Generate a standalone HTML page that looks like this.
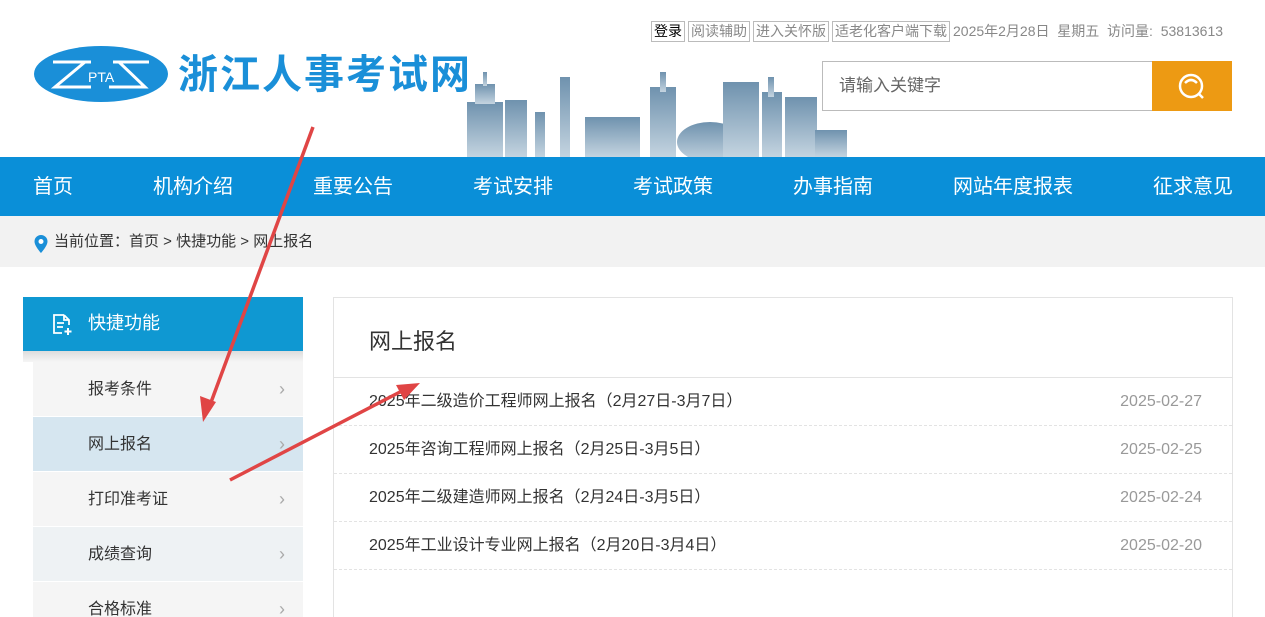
<!DOCTYPE html><html><head><meta charset="utf-8"><style>
*{margin:0;padding:0;box-sizing:border-box}
html,body{width:1265px;height:617px;overflow:hidden}
body{background:#fff;font-family:"Liberation Sans","Noto Sans CJK SC",sans-serif;position:relative}
.a{position:absolute}
.tb span{display:inline-block;border:1px solid #bbb;padding:0 2px;font-size:14px;color:#888;line-height:19px;margin-right:3px}
.nav{top:157px;left:0;width:1265px;height:59px;background:#0a8fd8}
.nav span{position:absolute;top:17px;color:#fff;font-size:20px;line-height:26px}
.side{left:33px;width:270px;height:55px;border-bottom:1px solid #fff;background:#f5f5f5;font-size:16px;color:#333;padding-left:55px;line-height:55px}
.side i{position:absolute;right:18px;top:0;font-style:normal;color:#aaa;font-size:18px}
.row{left:334px;width:898px;height:48px;border-bottom:1px dashed #e3e3e3;font-size:16px;color:#333;line-height:48px;padding-left:35px}
.row b{position:absolute;right:30px;font-weight:normal;color:#999}
</style></head><body>
<div class="a tb" style="left:651px;top:21px;white-space:nowrap"><span style="color:#000">登录</span><span>阅读辅助</span><span>进入关怀版</span><span>适老化客户端下载</span><font style="font-size:14px;color:#888">2025年2月28日&nbsp; 星期五&nbsp; 访问量:&nbsp; 53813613</font></div>
<svg class="a" style="left:33px;top:45px" width="136" height="58"><ellipse cx="68" cy="29" rx="67" ry="28" fill="#1a8fd8"/><path d="M20 17h38M52 17L22 42h36M80 17h36M86 17l26 25H76" stroke="#fff" stroke-width="3" fill="none"/><text x="55" y="37" fill="#fff" font-size="14" font-family="Liberation Sans">PTA</text></svg>
<div class="a" style="left:178px;top:50px;font-size:40px;font-weight:bold;color:#1a8fd8;letter-spacing:2px;line-height:50px">浙江人事考试网</div>
<svg class="a" style="left:465px;top:62px" width="385" height="95"><defs><linearGradient id="g" x1="0" y1="0" x2="0" y2="1"><stop offset="0" stop-color="#6f92ae"/><stop offset="1" stop-color="#c4d4e0"/></linearGradient></defs><g fill="url(#g)">
<rect x="2" y="40" width="36" height="55"/><rect x="10" y="22" width="20" height="20"/><rect x="18" y="10" width="4" height="14"/>
<rect x="40" y="38" width="22" height="57"/><rect x="70" y="50" width="10" height="45"/><rect x="95" y="15" width="10" height="80"/>
<rect x="120" y="55" width="55" height="40"/><rect x="185" y="25" width="26" height="70"/><rect x="195" y="10" width="6" height="20"/>
<ellipse cx="245" cy="80" rx="33" ry="20"/><rect x="258" y="20" width="36" height="75"/><rect x="297" y="30" width="20" height="65"/><rect x="303" y="15" width="6" height="20"/>
<rect x="320" y="35" width="32" height="60"/><rect x="350" y="68" width="32" height="27"/></g></svg>
<div class="a" style="left:822px;top:61px;width:331px;height:50px;border:1px solid #bbb;font-size:17px;color:#666;line-height:48px;padding-left:16px">请输入关键字</div>
<div class="a" style="left:1152px;top:61px;width:80px;height:50px;background:#ed9a13"><svg width="80" height="50"><circle cx="39" cy="25" r="11" stroke="#fff" stroke-width="2.5" fill="none"/><path d="M33 22q6-6 12 0M47 33l4 4" stroke="#fff" stroke-width="2.5" fill="none"/></svg></div>
<div class="a nav"><span style="left:33px">首页</span><span style="left:153px">机构介绍</span><span style="left:313px">重要公告</span><span style="left:473px">考试安排</span><span style="left:633px">考试政策</span><span style="left:793px">办事指南</span><span style="left:953px">网站年度报表</span><span style="left:1153px">征求意见</span></div>
<div class="a" style="top:216px;left:0;width:1265px;height:51px;background:#f2f2f2;font-size:15px;color:#333;line-height:52px;padding-left:54px">当前位置：首页 &gt; 快捷功能 &gt; 网上报名</div>
<svg class="a" style="left:33px;top:234px" width="16" height="20"><path d="M8 1a6.5 6.5 0 0 0-6.5 6.5C1.5 12 8 19 8 19s6.5-7 6.5-11.5A6.5 6.5 0 0 0 8 1z" fill="#1a8fd8"/><circle cx="8" cy="7.5" r="2.5" fill="#fff"/></svg>
<div class="a" style="left:23px;top:297px;width:280px;height:54px;background:#0f98d2;color:#fff;font-size:18px;line-height:52px;padding-left:65px">快捷功能</div>
<svg class="a" style="left:50px;top:313px" width="24" height="24"><path d="M14 2H4v18h8M14 2l5 5v5M14 2v5h5M7 10h7M7 14h6" stroke="#fff" stroke-width="1.8" fill="none"/><path d="M18 15v7M14.5 18.5h7" stroke="#fff" stroke-width="2"/></svg>
<div class="a" style="left:23px;top:351px;width:280px;height:11px;background:linear-gradient(#ddd,#f5f5f5)"></div>
<div class="a side" style="top:362px">报考条件<i>›</i></div>
<div class="a side" style="top:417px;background:#d6e6f0">网上报名<i>›</i></div>
<div class="a side" style="top:472px">打印准考证<i>›</i></div>
<div class="a side" style="top:527px;background:#eef2f4">成绩查询<i>›</i></div>
<div class="a side" style="top:582px;height:35px;border-bottom:0">合格标准<i>›</i></div>
<div class="a" style="left:333px;top:297px;width:900px;height:320px;border:1px solid #e3e3e3;border-bottom:0"></div>
<div class="a" style="left:369px;top:324px;font-size:22px;color:#333">网上报名</div>
<div class="a" style="left:334px;top:377px;width:898px;border-top:1px solid #e3e3e3"></div>
<div class="a row" style="top:378px">2025年二级造价工程师网上报名（2月27日-3月7日）<b>2025-02-27</b></div>
<div class="a row" style="top:426px">2025年咨询工程师网上报名（2月25日-3月5日）<b>2025-02-25</b></div>
<div class="a row" style="top:474px">2025年二级建造师网上报名（2月24日-3月5日）<b>2025-02-24</b></div>
<div class="a row" style="top:522px">2025年工业设计专业网上报名（2月20日-3月4日）<b>2025-02-20</b></div>
<svg class="a" style="left:0;top:0" width="1265" height="617"><g stroke="#e04545" stroke-width="3.5" fill="#e04545"><line x1="313" y1="127" x2="210" y2="405"/><line x1="230" y1="480" x2="400" y2="392"/></g>
<path d="M203 422l-3-26 16 6z" fill="#e04545"/><path d="M420 383l-24 2 8 15z" fill="#e04545"/></svg>
</body></html>
